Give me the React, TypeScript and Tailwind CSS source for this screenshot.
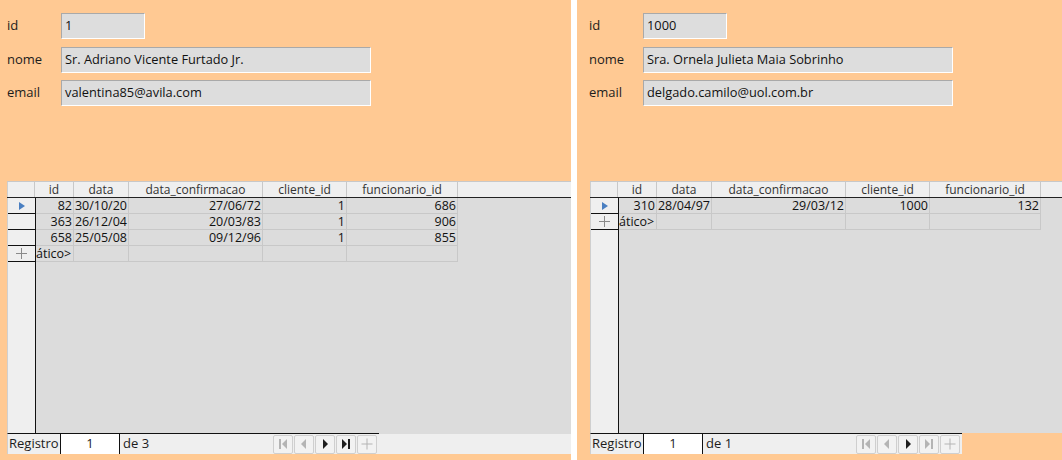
import React from "react";

type Row = { id: string; data: string; conf: string; cli: string; func: string };

const COLS = [39, 55, 134, 84, 111];
const HEADS = ["id", "data", "data_confirmacao", "cliente_id", "funcionario_id"];

function NavIcon({ kind, on }: { kind: string; on: boolean }) {
  const c = on ? "#1e1e1e" : "#b4b4b4";
  return (
    <svg width="12" height="12" viewBox="0 0 12 12">
      {kind === "first" && (
        <>
          <rect x="2" y="1" width="2" height="10" fill={c} />
          <polygon points="10,1 10,11 5,6" fill={c} />
        </>
      )}
      {kind === "prev" && <polygon points="8,1 8,11 3,6" fill={c} />}
      {kind === "next" && <polygon points="4,1 4,11 9,6" fill={c} />}
      {kind === "last" && (
        <>
          <polygon points="2,1 2,11 7,6" fill={c} />
          <rect x="8" y="1" width="2" height="10" fill={c} />
        </>
      )}
      {kind === "new" && (
        <>
          <rect x="5.5" y="0.5" width="1" height="11" fill={c} />
          <rect x="0.5" y="5.5" width="11" height="1" fill={c} />
        </>
      )}
    </svg>
  );
}

function Field({ label, value, w, mt }: { label: string; value: string; w: string; mt: string }) {
  return (
    <div className={`flex items-center ${mt}`}>
      <div className="w-[54px] text-[13px] text-[#1c1c1c]">{label}</div>
      <div
        className={`${w} h-[26px] bg-[#dddddd] border-t border-l border-b border-r border-t-[#a9a9a9] border-l-[#a9a9a9] border-b-white border-r-white flex items-center px-[3px] text-[12.8px] text-[#111]`}
      >
        {value}
      </div>
    </div>
  );
}

function Grid({
  rows,
  total,
  nav,
  restGrey,
}: {
  rows: Row[];
  total: string;
  nav: boolean[];
  restGrey: boolean;
}) {
  return (
    <div className="flex flex-col h-[273px] flex-1">
      {/* header */}
      <div className="flex h-[17px] bg-[#efefef] border-t border-t-[#c8c8c8] border-b border-b-[#222] text-[12px] text-[#333] leading-[15px]">
        <div className="w-[28px] shrink-0 border-l border-l-[#cfcfcf] border-r border-r-[#c8c8c8]" />
        {HEADS.map((h, i) => (
          <div
            key={h}
            style={{ width: COLS[i] }}
            className="shrink-0 text-center border-r border-r-[#c8c8c8]"
          >
            {h}
          </div>
        ))}
        <div className="flex-1" />
      </div>
      {/* body */}
      <div className="flex flex-1 min-h-0 bg-[#dcdcdc]">
        <div className="w-[29px] shrink-0 bg-[#efefef] border-l border-l-[#cfcfcf] border-r border-r-[#111] flex flex-col">
          {rows.map((r, i) => (
            <div key={i} className="h-[16px] border-b border-b-[#111] flex items-center justify-center">
              {i === 0 && (
                <svg width="6" height="8" viewBox="0 0 6 8">
                  <polygon points="0,0 6,4 0,8" fill="#4a7fc1" />
                </svg>
              )}
            </div>
          ))}
          <div className="h-[16px] border-b border-b-[#111] flex items-center justify-center">
            <svg width="11" height="11" viewBox="0 0 11 11">
              <rect x="5" y="0" width="1" height="11" fill="#8a8a8a" />
              <rect x="0" y="5" width="11" height="1" fill="#8a8a8a" />
            </svg>
          </div>
        </div>
        <div className="flex flex-col text-[12.5px] text-[#111] leading-[16px]">
          {rows.map((r, i) => (
            <div key={i} className="flex h-[16px]">
              {[r.id, r.data, r.conf, r.cli, r.func].map((v, j) => (
                <div
                  key={j}
                  style={{ width: COLS[j] - (j === 0 ? 1 : 0) }}
                  className="shrink-0 text-right pr-[1px] border-r border-b border-[#c8c8c8] overflow-hidden whitespace-nowrap"
                >
                  {v}
                </div>
              ))}
            </div>
          ))}
          <div className="flex h-[16px]">
            {COLS.map((w, j) => (
              <div
                key={j}
                style={{ width: w - (j === 0 ? 1 : 0) }}
                className="shrink-0 border-r border-b border-[#c8c8c8] overflow-hidden whitespace-nowrap"
              >
                {j === 0 ? "ático>" : ""}
              </div>
            ))}
          </div>
        </div>
      </div>
      {/* bottom bar */}
      <div className="flex h-[21px] text-[13px] text-[#1c1c1c]">
        <div className="flex w-[372px] shrink-0 bg-[#efefef] border-t border-t-[#111] border-l border-l-[#cfcfcf] items-stretch">
          <div className="w-[52px] shrink-0 flex items-center pl-[1px]">Registro</div>
          <div className="w-[60px] shrink-0 bg-white border-l border-r border-[#111] flex items-center justify-center">
            1
          </div>
          <div className="flex-1 flex items-center pl-[3px]">{total}</div>
          <div className="flex items-center gap-[1px] pr-[2px]">
            {["first", "prev", "next", "last", "new"].map((k, i) => (
              <div
                key={k}
                className="w-[20px] h-[19px] border border-[#cfcfcf] rounded-[2px] bg-[#f2f2f2] flex items-center justify-center"
              >
                <NavIcon kind={k} on={nav[i]} />
              </div>
            ))}
          </div>
        </div>
        <div className={`flex-1 ${restGrey ? "bg-[#efefef] border-t border-t-[#dcdcdc]" : ""}`} />
      </div>
    </div>
  );
}

export default function App() {
  return (
    <div
      className="flex w-[1062px] h-[460px] bg-white"
      style={{ fontFamily: '"Open Sans", "Noto Sans", sans-serif' }}
    >
      <div className="w-[571px] shrink-0 bg-[#ffc993] flex flex-col">
        <div className="h-[181px] pl-[7px] pt-[13px]">
          <Field label="id" value="1" w="w-[84px]" mt="" />
          <Field label="nome" value="Sr. Adriano Vicente Furtado Jr." w="w-[310px]" mt="mt-[8px]" />
          <Field label="email" value="valentina85@avila.com" w="w-[310px]" mt="mt-[7px]" />
        </div>
        <div className="flex pl-[7px]">
          <Grid
            rows={[
              { id: "82", data: "30/10/20", conf: "27/06/72", cli: "1", func: "686" },
              { id: "363", data: "26/12/04", conf: "20/03/83", cli: "1", func: "906" },
              { id: "658", data: "25/05/08", conf: "09/12/96", cli: "1", func: "855" },
            ]}
            total="de 3"
            nav={[false, false, true, true, false]}
            restGrey={true}
          />
        </div>
      </div>
      <div className="w-[6px] shrink-0 bg-white" />
      <div className="flex-1 bg-[#ffc993] flex flex-col">
        <div className="h-[181px] pl-[12px] pt-[13px]">
          <Field label="id" value="1000" w="w-[84px]" mt="" />
          <Field label="nome" value="Sra. Ornela Julieta Maia Sobrinho" w="w-[310px]" mt="mt-[8px]" />
          <Field label="email" value="delgado.camilo@uol.com.br" w="w-[310px]" mt="mt-[7px]" />
        </div>
        <div className="flex pl-[13px]">
          <Grid
            rows={[{ id: "310", data: "28/04/97", conf: "29/03/12", cli: "1000", func: "132" }]}
            total="de 1"
            nav={[false, false, true, false, false]}
            restGrey={false}
          />
        </div>
      </div>
    </div>
  );
}
